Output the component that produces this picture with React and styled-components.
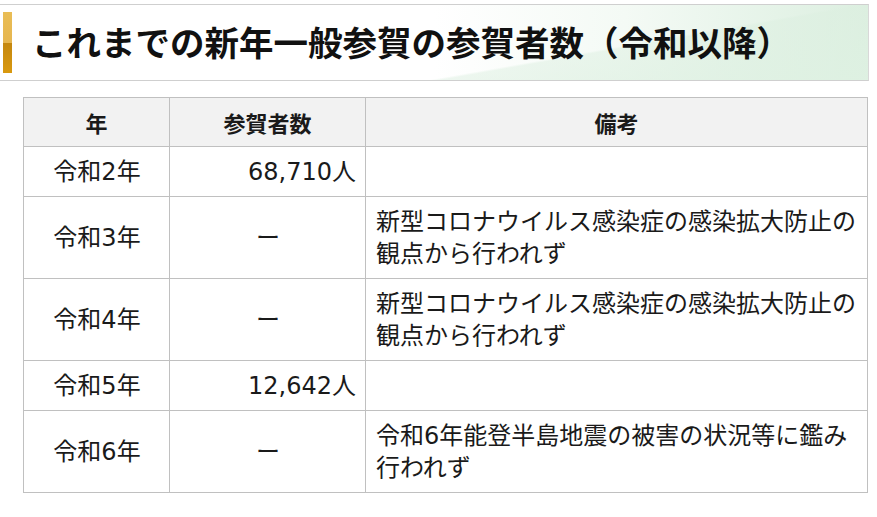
import styled, { createGlobalStyle } from "styled-components";

const GlobalStyle = createGlobalStyle`
  body {
    margin: 0;
    background: #fff;
    font-family: "Noto Sans CJK JP", "Noto Sans", sans-serif;
    color: #1a1a1a;
  }
`;

const rows = [
  { year: "令和2年", count: "68,710人", note: "" },
  { year: "令和3年", count: "ー", note: "新型コロナウイルス感染症の感染拡大防止の観点から行われず" },
  { year: "令和4年", count: "ー", note: "新型コロナウイルス感染症の感染拡大防止の観点から行われず" },
  { year: "令和5年", count: "12,642人", note: "" },
  { year: "令和6年", count: "ー", note: "令和6年能登半島地震の被害の状況等に鑑み行われず" },
];

export default function App() {
  return (
    <>
      <GlobalStyle />
      <Page>
        <Heading>
          <Bar />
          <h2>これまでの新年一般参賀の参賀者数（令和以降）</h2>
        </Heading>
        <Table>
          <colgroup>
            <col style={{ width: 146 }} />
            <col style={{ width: 196 }} />
            <col />
          </colgroup>
          <thead>
            <tr>
              <Th>年</Th>
              <Th>参賀者数</Th>
              <Th>備考</Th>
            </tr>
          </thead>
          <tbody>
            {rows.map((r) => (
              <tr key={r.year}>
                <Td $align="center">{r.year}</Td>
                <Td $align={r.count === "ー" ? "center" : "right"}>{r.count}</Td>
                <Td>{r.note}</Td>
              </tr>
            ))}
          </tbody>
        </Table>
      </Page>
    </>
  );
}

const Page = styled.div`
  width: 877px;
  padding-top: 4px;
`;

const Heading = styled.div`
  width: 869px;
  height: 77px;
  box-sizing: border-box;
  border-top: 1px solid #cfcfcf;
  border-bottom: 1px solid #cfcfcf;
  border-right: 1px solid #d8d8d8;
  display: flex;
  align-items: center;
  gap: 20px;
  padding-left: 3px;
  background:
    linear-gradient(170deg, rgba(255, 255, 255, 0) 66%, rgba(220, 239, 224, 0.5) 67%, rgba(222, 241, 226, 0.85) 100%),
    linear-gradient(to right, #ffffff 50%, #f4faf5 72%, #dcefe0 100%);
  h2 {
    margin: 0;
    font-size: 34.5px;
    font-weight: 700;
    color: #111;
    line-height: 1;
    padding-bottom: 3px;
  }
`;

const Bar = styled.div`
  width: 9px;
  height: 61px;
  background: linear-gradient(to bottom, #e9bd55 0%, #e6b650 50%, #c4870f 51%, #d9990f 100%);
`;

const Table = styled.table`
  margin: 16px 0 0 23px;
  width: 845px;
  border-collapse: collapse;
  table-layout: fixed;
  font-family: "DejaVu Sans", "Noto Sans CJK JP", sans-serif;
  font-size: 24px;
  line-height: 32px;
`;

const Th = styled.th`
  background: #f2f2f2;
  border: 1px solid #c0c0c0;
  font-family: "Noto Sans CJK JP", sans-serif;
  font-weight: 700;
  text-align: center;
  height: 48px;
  padding: 0 9px;
  font-size: 22px;
`;

const Td = styled.td`
  border: 1px solid #c0c0c0;
  padding: 9px 9px 8px 10px;
  text-align: ${(p) => p.$align || "left"};
  vertical-align: middle;
  height: 32px;
`;
